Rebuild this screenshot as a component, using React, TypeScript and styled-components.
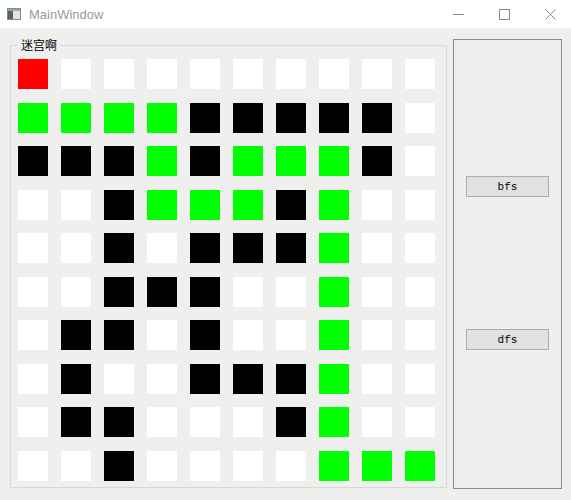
import React from "react";
import styled, { createGlobalStyle } from "styled-components";

type Kind = "start" | "path" | "wall" | "open";

const GlobalStyle = createGlobalStyle`
  html, body {
    margin: 0;
    padding: 0;
    background: #eff0ee;
  }
  body {
    width: 571px;
    height: 500px;
    overflow: hidden;
    font-family: "Noto Sans", "Liberation Sans", sans-serif;
  }
`;

const Window = styled.div`
  width: 571px;
  height: 500px;
  display: flex;
  flex-direction: column;
  background: #eff0ee;
`;

const TitleBar = styled.div`
  height: 28px;
  flex: none;
  display: flex;
  align-items: center;
  background: #ffffff;
  overflow: hidden;
`;

const AppIcon = styled.svg`
  margin-left: 7px;
  flex: none;
`;

const Title = styled.span`
  margin-left: 8px;
  margin-top: 1px;
  font-family: "Liberation Sans", Arial, sans-serif;
  font-size: 13px;
  color: #9a9a9a;
  flex: 1;
`;

const Controls = styled.div`
  display: flex;
  height: 100%;
  flex: none;
  margin-right: -2px;
`;

const ControlButton = styled.div`
  width: 46px;
  height: 100%;
  display: flex;
  align-items: center;
  padding-left: 18px;
  box-sizing: border-box;
`;

const Body = styled.div`
  flex: 1;
  display: flex;
  align-items: flex-start;
  padding: 11px 0 0 10px;
`;

const GroupBox = styled.fieldset`
  margin: 0;
  width: 437px;
  height: 449px;
  box-sizing: border-box;
  border: 1px solid #d7d9d6;
  padding: 8px 0 0 7px;
  min-width: 0;
`;

const GroupTitle = styled.legend`
  padding: 0 3px;
  font-family: "Noto Sans CJK SC", sans-serif;
  font-size: 12px;
  line-height: 12px;
  height: 12px;
  color: #000;
`;

const MazeGrid = styled.div`
  display: grid;
  grid-template-columns: repeat(10, 30px);
  grid-auto-rows: 30px;
  column-gap: 13px;
  row-gap: 13.56px;
`;

const cellColors: Record<Kind, string> = {
  start: "#ff0000",
  path: "#00ff00",
  wall: "#000000",
  open: "#ffffff",
};

const Cell = styled.div<{ $kind: Kind }>`
  width: 30px;
  height: 30px;
  background: ${(p) => cellColors[p.$kind]};
`;

const SidePanel = styled.div`
  margin-left: 6px;
  width: 109px;
  height: 450px;
  box-sizing: border-box;
  border: 1px solid #868a91;
  display: flex;
  flex-direction: column;
  align-items: center;
  padding-top: 136px;
  gap: 132px;
`;

const ActionButton = styled.button`
  width: 83px;
  height: 21px;
  margin: 0;
  padding: 0;
  background: #e1e1e1;
  border: 1px solid #adadad;
  font-family: "Liberation Mono", "DejaVu Sans Mono", monospace;
  font-size: 11px;
  color: #000;
  cursor: pointer;
`;

// R = start, G = found path, B = wall, W = open
const maze = [
  "RWWWWWWWWW",
  "GGGGBBBBBW",
  "BBBGBGGGBW",
  "WWBGGGBGWW",
  "WWBWBBBGWW",
  "WWBBBWWGWW",
  "WBBWBWWGWW",
  "WBWWBBBGWW",
  "WBBWWWBGWW",
  "WWBWWWWGGG",
];

const kindOf: Record<string, Kind> = {
  R: "start",
  G: "path",
  B: "wall",
  W: "open",
};

const App: React.FC = () => {
  return (
    <Window>
      <GlobalStyle />
      <TitleBar>
        <AppIcon width="14" height="12" viewBox="0 0 14 12">
          <rect x="0.5" y="0.5" width="13" height="11" fill="#dfe3e3" stroke="#7f8b8c" />
          <rect x="1" y="1" width="12" height="2" fill="#9aa5a6" />
          <rect x="1" y="3" width="5" height="8" fill="#56625f" />
        </AppIcon>
        <Title>MainWindow</Title>
        <Controls>
          <ControlButton>
            <svg width="11" height="11" viewBox="0 0 11 11">
              <line x1="0" y1="5.5" x2="11" y2="5.5" stroke="#8a8a8a" />
            </svg>
          </ControlButton>
          <ControlButton>
            <svg width="11" height="11" viewBox="0 0 11 11">
              <rect x="0.5" y="0.5" width="10" height="10" fill="none" stroke="#8a8a8a" />
            </svg>
          </ControlButton>
          <ControlButton>
            <svg width="11" height="11" viewBox="0 0 11 11">
              <path d="M0.5 0.5 L10.5 10.5 M10.5 0.5 L0.5 10.5" stroke="#8a8a8a" />
            </svg>
          </ControlButton>
        </Controls>
      </TitleBar>
      <Body>
        <GroupBox>
          <GroupTitle>迷宫啊</GroupTitle>
          <MazeGrid>
            {maze.map((row, r) =>
              row.split("").map((c, i) => <Cell key={`${r}-${i}`} $kind={kindOf[c]} />),
            )}
          </MazeGrid>
        </GroupBox>
        <SidePanel>
          <ActionButton>bfs</ActionButton>
          <ActionButton>dfs</ActionButton>
        </SidePanel>
      </Body>
    </Window>
  );
};

export default App;
